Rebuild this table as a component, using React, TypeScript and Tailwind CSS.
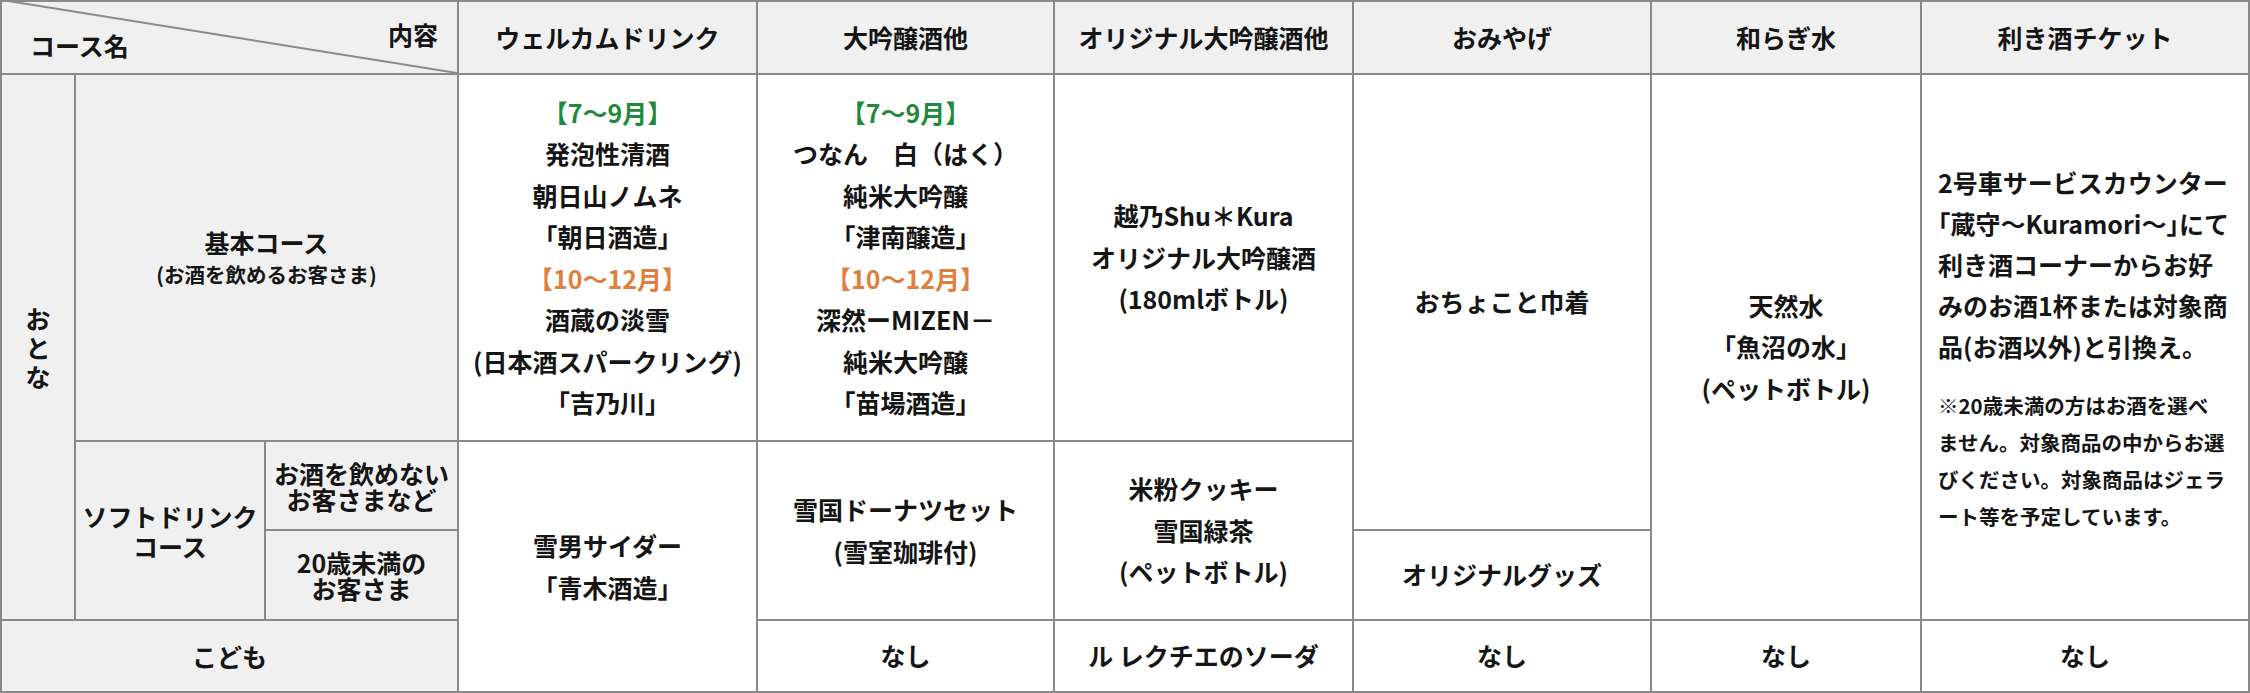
import type { ReactNode } from "react";

type CellProps = {
  className?: string;
  children?: ReactNode;
};

const Head = ({ className = "", children }: CellProps) => (
  <div
    className={`flex items-center justify-center bg-[#f0f0f0] text-center text-[25px] leading-none ${className}`}
  >
    {children}
  </div>
);

const Body = ({ className = "", children }: CellProps) => (
  <div
    className={`flex flex-col items-center justify-center bg-white text-center text-[25px] leading-[41.5px] whitespace-nowrap ${className}`}
  >
    {children}
  </div>
);

const Green = ({ children }: CellProps) => (
  <span className="text-[#1f8a3c]">{children}</span>
);

const Orange = ({ children }: CellProps) => (
  <span className="text-[#df7f3d]">{children}</span>
);

// corner brackets set at half width, as in the print layout
const Quote = ({ children }: CellProps) => (
  <span>
    <span className="[font-feature-settings:'halt']">「</span>
    {children}
    <span className="[font-feature-settings:'halt']">」</span>
  </span>
);

const App = () => {
  return (
    <div className="w-[2250px] h-[693px] bg-white font-['Noto_Sans_CJK_JP','Noto_Sans',sans-serif] font-bold text-[#151515]">
      <div className="grid grid-cols-[72px_188px_191px_297px_295px_297px_296px_268px_326px] grid-rows-[71px_365px_87px_88px_70px] gap-[2px] p-[2px] bg-[#8a8a8a]">
        {/* header row */}
        <div className="relative col-span-3 flex justify-between bg-[#f0f0f0] text-[25px] leading-none">
          <svg
            className="absolute inset-0 h-full w-full"
            preserveAspectRatio="none"
          >
            <line x1="0" y1="-2" x2="100%" y2="100%" stroke="#8a8a8a" strokeWidth="2" />
          </svg>
          <span className="relative pl-[28px] pt-[31px]">コース名</span>
          <span className="relative pr-[19px] pt-[20px]">内容</span>
        </div>
        <Head>ウェルカムドリンク</Head>
        <Head>大吟醸酒他</Head>
        <Head>オリジナル大吟醸酒他</Head>
        <Head>おみやげ</Head>
        <Head>和らぎ水</Head>
        <Head>利き酒チケット</Head>

        {/* おとな */}
        <div className="row-span-3 flex flex-col items-center justify-center bg-[#f0f0f0] text-[25px] leading-[29px]">
          <span>お</span>
          <span>と</span>
          <span>な</span>
        </div>
        <div className="col-span-2 flex flex-col items-center justify-center bg-[#f0f0f0] text-center">
          <span className="text-[25px] leading-[32px]">基本コース</span>
          <span className="text-[20.5px] leading-[32px]">(お酒を飲めるお客さま)</span>
        </div>

        <Body>
          <Green>【7〜9月】</Green>
          <span>発泡性清酒</span>
          <span>朝日山ノムネ</span>
          <Quote>朝日酒造</Quote>
          <Orange>【10〜12月】</Orange>
          <span>酒蔵の淡雪</span>
          <span>(日本酒スパークリング)</span>
          <Quote>吉乃川</Quote>
        </Body>
        <Body>
          <Green>【7〜9月】</Green>
          <span>つなん　白（はく）</span>
          <span>純米大吟醸</span>
          <Quote>津南醸造</Quote>
          <Orange>【10〜12月】</Orange>
          <span>深然ーMIZEN－</span>
          <span>純米大吟醸</span>
          <Quote>苗場酒造</Quote>
        </Body>
        <Body>
          <span>越乃Shu＊Kura</span>
          <span>オリジナル大吟醸酒</span>
          <span>(180mlボトル)</span>
        </Body>
        <Body className="row-span-2">
          <span>おちょこと巾着</span>
        </Body>
        <Body className="row-span-3">
          <span>天然水</span>
          <Quote>魚沼の水</Quote>
          <span>(ペットボトル)</span>
        </Body>
        <div className="row-span-3 flex flex-col justify-center bg-white pl-[16px] pt-[2px] whitespace-nowrap">
          <p className="text-[25px] leading-[41px]">
            2号車サービスカウンター
            <br />
            <Quote>蔵守〜Kuramori〜</Quote>にて
            <br />
            利き酒コーナーからお好
            <br />
            みのお酒1杯または対象商
            <br />
            品(お酒以外)と引換え。
          </p>
          <p className="mt-[20px] text-[20.5px] leading-[37px]">
            ※20歳未満の方はお酒を選べ
            <br />
            ません。対象商品の中からお選
            <br />
            びください。対象商品はジェラ
            <br />
            ート等を予定しています。
          </p>
        </div>

        {/* ソフトドリンクコース */}
        <div className="row-span-2 flex flex-col items-center justify-center bg-[#f0f0f0] text-[25px] leading-[30px]">
          <span>ソフトドリンク</span>
          <span>コース</span>
        </div>
        <div className="flex flex-col items-center justify-center bg-[#f0f0f0] text-[25px] leading-[26px]">
          <span>お酒を飲めない</span>
          <span>お客さまなど</span>
        </div>
        <Body className="row-span-3">
          <span>雪男サイダー</span>
          <Quote>青木酒造</Quote>
        </Body>
        <Body className="row-span-2">
          <span>雪国ドーナツセット</span>
          <span>(雪室珈琲付)</span>
        </Body>
        <Body className="row-span-2">
          <span>米粉クッキー</span>
          <span>雪国緑茶</span>
          <span>(ペットボトル)</span>
        </Body>

        <div className="flex flex-col items-center justify-center bg-[#f0f0f0] text-[25px] leading-[26px]">
          <span>20歳未満の</span>
          <span>お客さま</span>
        </div>
        <Body>
          <span>オリジナルグッズ</span>
        </Body>

        {/* こども */}
        <Head className="col-span-3">こども</Head>
        <Body>なし</Body>
        <Body>ル レクチエのソーダ</Body>
        <Body>なし</Body>
        <Body>なし</Body>
        <Body>なし</Body>
      </div>
    </div>
  );
};

export default App;
